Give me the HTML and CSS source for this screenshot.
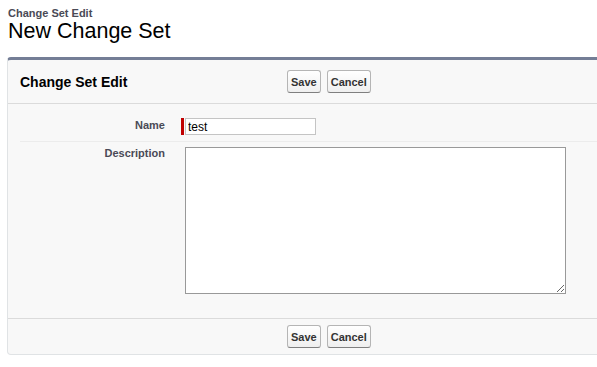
FILE: index.html
```html
<!DOCTYPE html>
<html lang="en">
<head>
    <meta charset="UTF-8">
    <title>New Change Set</title>
    <link rel="stylesheet" href="styles.css">
</head>
<body>
    <div class="page-head">
        <div class="page-type">Change Set Edit</div>
        <h1 class="page-title">New Change Set</h1>
    </div>

    <div class="panel">
        <div class="panel-header">
            <h2 class="panel-title">Change Set Edit</h2>
            <div class="btn-group">
                <button class="btn">Save</button>
                <button class="btn">Cancel</button>
            </div>
        </div>

        <div class="panel-body">
            <div class="field-row row-name">
                <label class="field-label">Name</label>
                <div class="field-value">
                    <span class="required-bar"></span>
                    <input class="text-input" type="text" value="test">
                </div>
            </div>
            <div class="field-row row-desc">
                <label class="field-label">Description</label>
                <div class="field-value">
                    <textarea class="text-area"></textarea>
                </div>
            </div>
        </div>

        <div class="panel-footer">
            <div class="btn-group">
                <button class="btn">Save</button>
                <button class="btn">Cancel</button>
            </div>
        </div>
    </div>
</body>
</html>
```

FILE: styles.css
```css
body {
    margin: 0;
    background-color: #ffffff;
    font-family: "Liberation Sans", Arial, sans-serif;
    color: #000000;
    overflow: hidden;
}

.page-head {
    padding: 7px 0 0 8px;
    height: 50px;
}

.page-type {
    font-size: 11px;
    font-weight: bold;
    color: #4a4a56;
    line-height: 13px;
}

.page-title {
    margin: 0;
    font-size: 21.5px;
    font-weight: normal;
    line-height: 22px;
}

.panel {
    margin-left: 7px;
    width: 610px;
    background-color: #f8f8f8;
    border: 1px solid #e0e3e5;
    border-top: 3px solid #747e96;
    border-radius: 4px;
}

.panel-header {
    display: flex;
    align-items: center;
    height: 43px;
    border-bottom: 1px solid #dbdbdb;
}

.panel-title {
    margin: 0;
    width: 279px;
    padding-left: 12px;
    box-sizing: border-box;
    font-size: 14px;
    font-weight: bold;
    color: #000000;
}

.btn-group {
    display: flex;
    gap: 6px;
}

.btn {
    height: 23px;
    padding: 0 3px;
    font-family: "Liberation Sans", Arial, sans-serif;
    font-size: 11px;
    font-weight: bold;
    color: #333333;
    background: linear-gradient(#ffffff, #efefef);
    border: 1px solid #b5b5b5;
    border-bottom-color: #7f7f7f;
    border-radius: 3px;
}

.panel-body {
    padding-left: 12px;
}

.field-row {
    display: flex;
    align-items: flex-start;
}

.row-name {
    height: 37px;
    border-bottom: 1px solid #ececec;
}

.row-desc {
    height: 176px;
    border-bottom: 1px solid #dbdbdb;
    margin-left: -12px;
    padding-left: 12px;
}

.field-label {
    width: 145px;
    text-align: right;
    font-size: 11px;
    font-weight: bold;
    color: #4a4a56;
}

.row-name .field-label {
    padding-top: 15px;
}

.row-desc .field-label {
    padding-top: 5px;
}

.field-value {
    display: flex;
    padding-left: 16px;
}

.row-name .field-value {
    padding-top: 14px;
}

.row-desc .field-value {
    padding-top: 5px;
    padding-left: 20px;
}

.required-bar {
    width: 3px;
    height: 17px;
    background-color: #c00000;
    margin-right: 1px;
}

.text-input {
    width: 131px;
    height: 17px;
    box-sizing: border-box;
    border: 1px solid #c4c4c4;
    padding: 0 2px;
    font-family: "Liberation Sans", Arial, sans-serif;
    font-size: 12px;
    color: #000000;
    background-color: #ffffff;
}

.text-area {
    width: 381px;
    height: 147px;
    box-sizing: border-box;
    border: 1px solid #999999;
    margin: 0;
    background-color: #ffffff;
}

.panel-footer {
    display: flex;
    align-items: center;
    height: 35px;
    padding-left: 279px;
}
```
